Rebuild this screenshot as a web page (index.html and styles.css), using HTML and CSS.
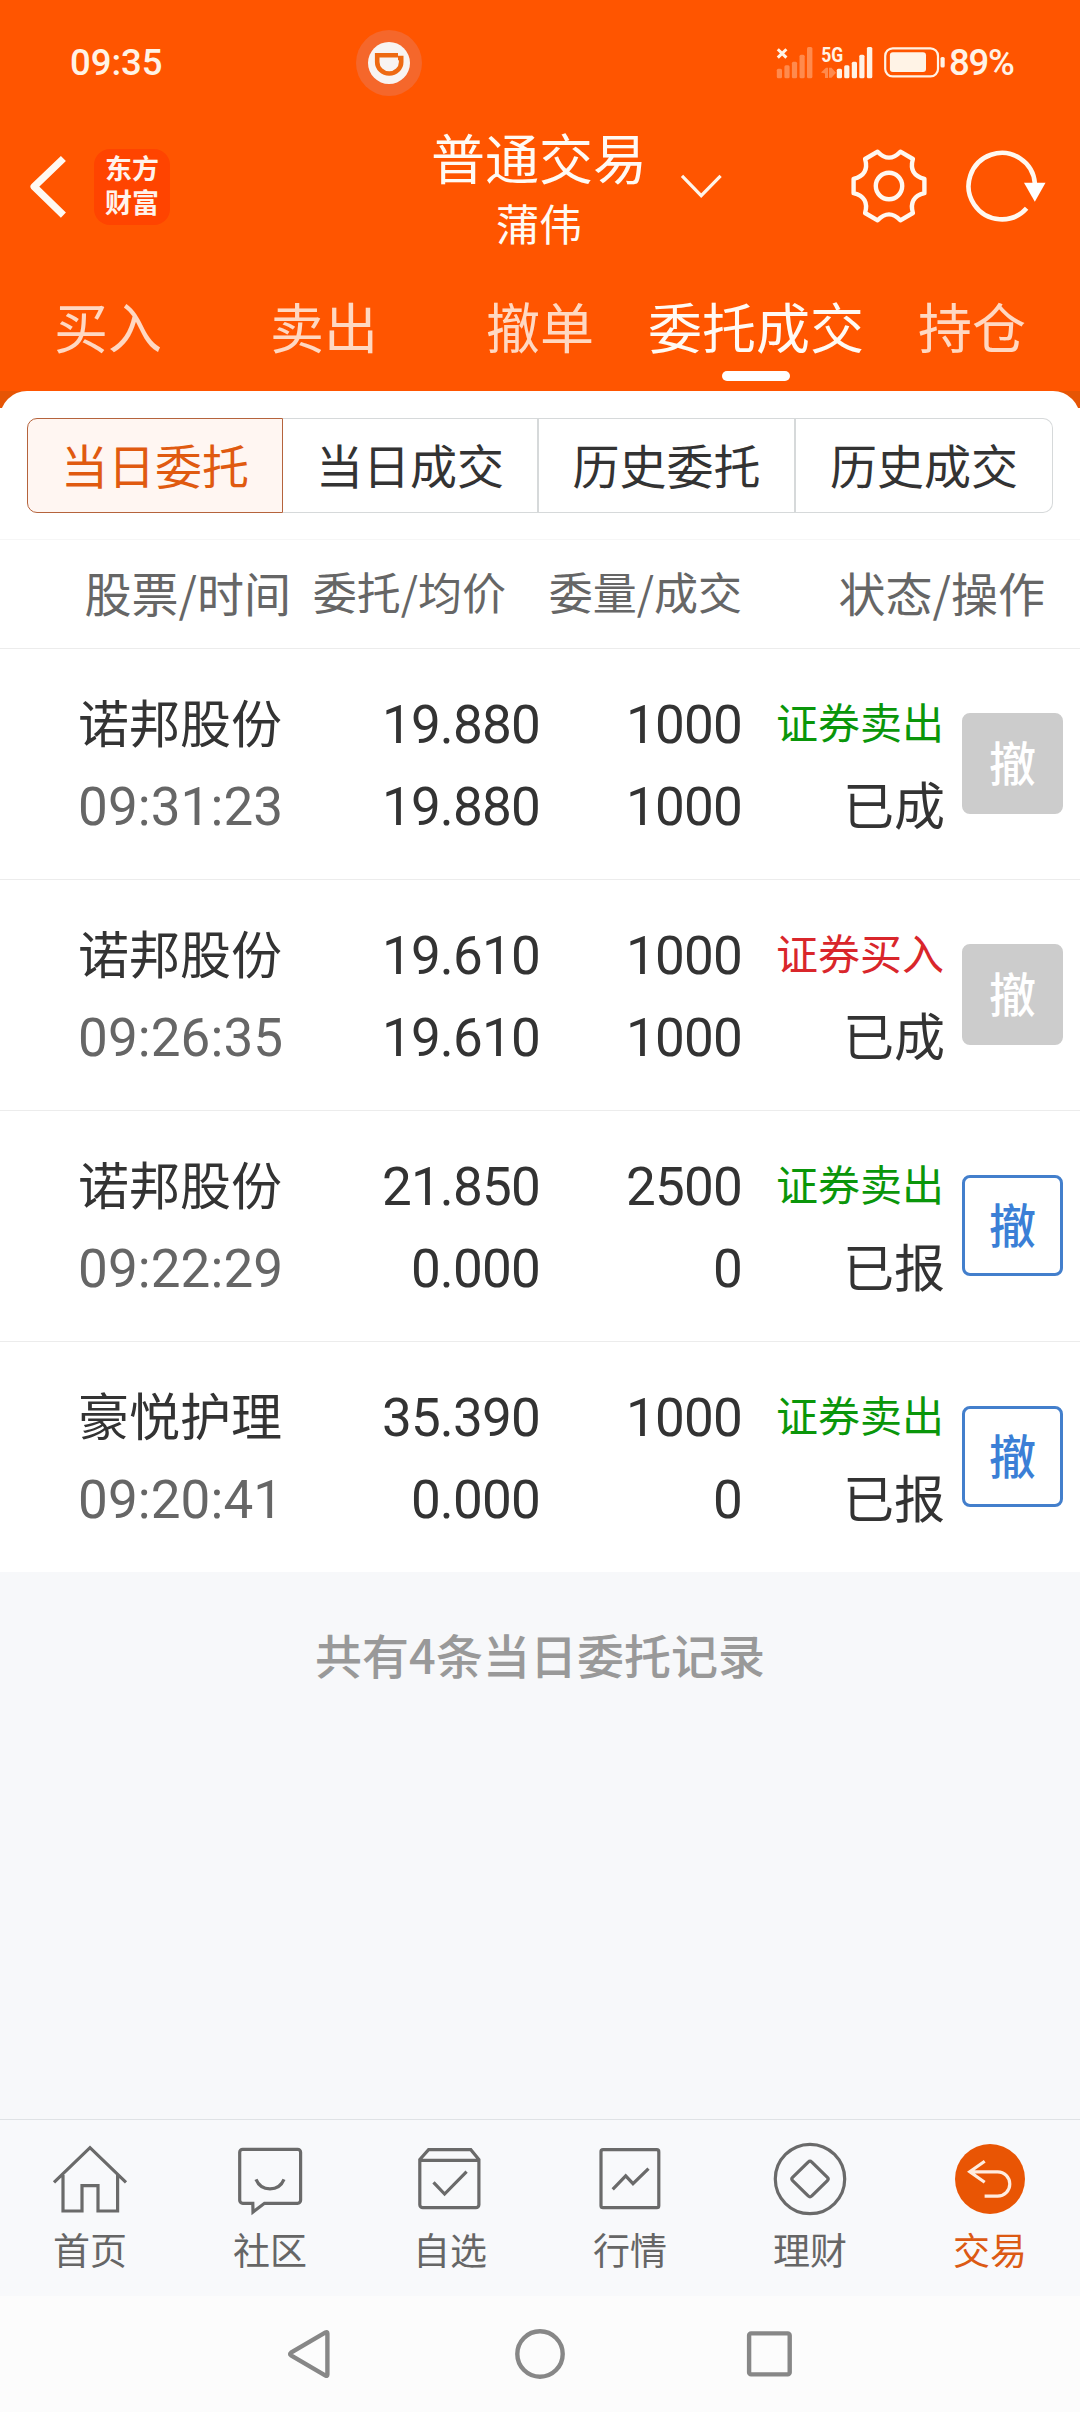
FILE: index.html
```html
<!DOCTYPE html>
<html lang="zh-CN">
<head>
<meta charset="utf-8">
<title>普通交易</title>
<link rel="stylesheet" href="styles.css">
</head>
<body>
<div class="app">
  <header class="top">
    <div class="status">
      <span class="clock">09:35</span>
      <svg class="pill" width="66" height="66" viewBox="0 0 66 66">
        <circle cx="33" cy="33" r="33" fill="#f5672b"/>
        <circle cx="33" cy="33" r="21" fill="#f8f4f2"/>
        <path d="M42 25.2H21.2V32a12 11.500 0 0 0 24 0V28H42" fill="none" stroke="#ee6a12" stroke-width="4.600"/>
      </svg>
      <svg class="signals" width="172" height="46" viewBox="776 40 172 46">
        <g fill="#ff8a4d">
          <rect x="776.8" y="68.7" width="5.2" height="9.5" rx="1.5"/><rect x="784.4" y="65.2" width="5.2" height="13" rx="1.5"/><rect x="791.9" y="61.7" width="5.2" height="16.5" rx="1.5"/><rect x="799.5" y="54.7" width="5.2" height="23.5" rx="1.5"/><rect x="807" y="47" width="5.4" height="31.2" rx="1.5"/>
          <path d="M821 72.5l5-4.7h2V78h-3v-4.500zM829 67.800h2.500l4.500 5-4.500 5H829z"/>
        </g>
        <path d="M777.8 49.2l8.6 8.4M786.4 49.2l-8.6 8.4" stroke="#fff3e6" stroke-width="3"/>
        <text class="net" x="821.2" y="62.4" textLength="22" lengthAdjust="spacingAndGlyphs">5G</text>
        <g fill="#fff3e6">
          <rect x="836.8" y="68.7" width="5.2" height="9.5" rx="1.5"/><rect x="844.2" y="65.2" width="5.2" height="13" rx="1.5"/><rect x="851.8" y="61.7" width="5.2" height="16.5" rx="1.5"/><rect x="859.3" y="54.7" width="5.2" height="23.5" rx="1.5"/><rect x="866.9" y="47" width="5.4" height="31.2" rx="1.5"/>
          <rect x="889.9" y="52.3" width="36.1" height="19.7" rx="3"/><rect x="940.5" y="57" width="4.2" height="10.5" rx="1.5"/>
        </g>
        <rect x="885.2" y="48.4" width="52.8" height="28" rx="7.5" fill="none" stroke="#fff3e6" stroke-width="2.2"/>
      </svg>
      <span class="charge">89%</span>
    </div>

    <div class="titlebar">
      <div class="brand">
        <svg width="44" height="76" viewBox="26 149 44 76"><path d="M63.400 158.500L34.100 186.700l29.300 28.500" fill="none" stroke="#fff9f2" stroke-width="7.200" stroke-linejoin="round"/></svg>
        <div class="logo"><span>东方</span><span>财富</span></div>
      </div>
      <div class="title">
        <span class="title-main">普通交易</span>
        <span class="title-sub">蒲伟</span>
      </div>
      <svg class="chevron" width="46" height="28" viewBox="678 172 46 28"><path d="M682 175.800l19.200 19.800 19.400-19.800" fill="none" stroke="#fff5ea" stroke-width="3.200"/></svg>
      <div class="tools">
        <svg width="80" height="80" viewBox="-40 -40 80 80" fill="none" stroke="#fff8f0" stroke-width="4.400" stroke-linejoin="round">
          <path d="M-11.400-34.300Q0-22.400 11.400-34.300L23.900-27Q19.400-11.200 35.400-7.200V7.200Q19.400 11.200 23.900 27L11.400 34.300Q0 22.400-11.400 34.300L-23.900 27Q-19.400 11.200-35.400 7.200V-7.200Q-19.400-11.200-23.900-27Z"/>
          <circle r="13.200"/>
        </svg>
        <svg width="88" height="80" viewBox="962 146.300 88 80">
          <path d="M1034.900 184A33.200 33.200 0 1 0 1026.600 208.500" fill="none" stroke="#fff8f0" stroke-width="4.600"/>
          <path d="M1024 183h21.500l-10.700 19z" fill="#fff"/>
        </svg>
      </div>
    </div>

    <nav class="tabs">
      <span>买入</span><span>卖出</span><span>撤单</span><span class="on">委托成交</span><span>持仓</span>
    </nav>
  </header>

  <section class="corner"><div class="corner-sheet"></div></section>

  <main class="sheet">
    <div class="segments">
      <span class="seg on">当日委托</span><span class="seg">当日成交</span><span class="seg">历史委托</span><span class="seg">历史成交</span>
    </div>
    <div class="cols head">
      <span class="big">股票/时间</span><span>委托/均价</span><span>委量/成交</span><span class="big">状态/操作</span>
    </div>

    <div class="cols row">
      <div class="cell stock"><span class="zh">诺邦股份</span><span class="num time">09:31:23</span></div>
      <div class="cell"><span class="num">19.880</span><span class="num">19.880</span></div>
      <div class="cell"><span class="num">1000</span><span class="num">1000</span></div>
      <div class="cell"><span class="side sell">证券卖出</span><span class="zh state">已成</span></div>
      <span class="cancel off">撤</span>
    </div>
    <div class="cols row">
      <div class="cell stock"><span class="zh">诺邦股份</span><span class="num time">09:26:35</span></div>
      <div class="cell"><span class="num">19.610</span><span class="num">19.610</span></div>
      <div class="cell"><span class="num">1000</span><span class="num">1000</span></div>
      <div class="cell"><span class="side buy">证券买入</span><span class="zh state">已成</span></div>
      <span class="cancel off">撤</span>
    </div>
    <div class="cols row">
      <div class="cell stock"><span class="zh">诺邦股份</span><span class="num time">09:22:29</span></div>
      <div class="cell"><span class="num">21.850</span><span class="num">0.000</span></div>
      <div class="cell"><span class="num">2500</span><span class="num">0</span></div>
      <div class="cell"><span class="side sell">证券卖出</span><span class="zh state">已报</span></div>
      <span class="cancel">撤</span>
    </div>
    <div class="cols row">
      <div class="cell stock"><span class="zh">豪悦护理</span><span class="num time">09:20:41</span></div>
      <div class="cell"><span class="num">35.390</span><span class="num">0.000</span></div>
      <div class="cell"><span class="num">1000</span><span class="num">0</span></div>
      <div class="cell"><span class="side sell">证券卖出</span><span class="zh state">已报</span></div>
      <span class="cancel">撤</span>
    </div>
  </main>

  <p class="summary">共有4条当日委托记录</p>

  <nav class="tabbar">
    <div class="item"><svg viewBox="0 0 80 80"><path d="M4 42.300L40 7.700l36 34.600M13 35v36h19V45.700h16V71h19.600V35"/></svg><span>首页</span></div>
    <div class="item"><svg viewBox="0 0 80 80"><path d="M22.800 63.300H12.700a3 3 0 0 1-3-3v-48a3 3 0 0 1 3-3h54.900a3 3 0 0 1 3 3v48a3 3 0 0 1-3 3H34.500L23 72z"/><path d="M26 39.300q3.900 9.500 14 9.500t14-9.500"/></svg><span>社区</span></div>
    <div class="item"><svg viewBox="0 0 80 80"><path d="M9.800 19.500l8.800-9.800h42.200l8.100 9.800v45.200a3 3 0 0 1-3 3H12.800a3 3 0 0 1-3-3zM9.800 20.300h59M23.500 42.300L34.600 54l22-22.300"/></svg><span>自选</span></div>
    <div class="item"><svg viewBox="0 0 80 80"><rect x="11" y="9.700" width="57.800" height="58" rx="2"/><path d="M22.700 49.300l13-13.400 7.300 7.800 15.500-15"/></svg><span>行情</span></div>
    <div class="item"><svg viewBox="0 0 80 80"><circle cx="40" cy="39" r="34.700"/><path d="M38.400 22q1.600-1.800 3.200 0l15.800 15.400q1.600 1.600 0 3.200L41.600 56q-1.600 1.800-3.200 0L22.600 40.600q-1.600-1.600 0-3.200z"/></svg><span>理财</span></div>
    <div class="item on"><svg viewBox="0 0 80 80"><circle cx="40" cy="39" r="35" fill="#e95504" stroke="none"/><path d="M34.700 21.200L19.800 31.800l14.900 10.400M20 31.800h27.600a12.200 12.200 0 0 1 0 24.400h-13" stroke="#ffece0"/></svg><span>交易</span></div>
  </nav>

  <footer class="sysnav">
    <svg viewBox="280 2326 60 56"><path d="M325.500 2332.400q1.900-.9 1.900 1v41.200q0 1.900-1.900 1L291 2355.300q-1.800-1.300 0-2.600z"/></svg>
    <svg viewBox="510 2326 60 56"><circle cx="540" cy="2354" r="22.700"/></svg>
    <svg viewBox="740 2326 60 56"><rect x="749.100" y="2333.400" width="40.600" height="41" rx="2"/></svg>
  </footer>
</div>
</body>
</html>
```
FILE: styles.css
```css
* { box-sizing: border-box; }

body {
  margin: 0;
  background: #f7f8fa;
  color: #333;
  font-family: "Noto Sans CJK SC", sans-serif;
}

.app {
  width: 1080px;
  height: 2412px;
  display: flex;
  flex-direction: column;
  overflow: hidden;
}

svg { display: block; flex: none; }
span { white-space: nowrap; }

/* Header */
.top { height: 391px; background: #ff5500; flex: none; }

.status {
  height: 126px;
  display: flex;
  align-items: center;
  padding-left: 70px;
  color: #fff3e6;
  font: 500 36.5px/40px Roboto, sans-serif;
}
.clock { width: 286px; }
.pill { margin-right: 354px; }
.signals { margin-right: 1px; }
.charge { letter-spacing: -1.2px; }
.net { font: 700 20px Roboto, sans-serif; fill: #fff3e6; }

.titlebar {
  height: 146px;
  display: grid;
  grid-template-columns: 406px 266px 1fr auto;
  color: #fffaf4;
}
.brand { display: flex; gap: 24px; padding: 23px 0 0 26px; }
.logo {
  width: 76px;
  height: 76px;
  border-radius: 16px;
  background: #ff4400;
  color: #fff3ec;
  display: flex;
  flex-direction: column;
  align-items: center;
  padding-top: 2px;
  font-size: 27px;
  font-weight: 700;
  line-height: 34px;
}
.title { display: flex; flex-direction: column; align-items: center; padding-top: 1px; }
.title-main { font-size: 54px; line-height: 60px; }
.title-sub { font-size: 43px; line-height: 70px; }
.chevron { margin: 46px 0 0 6px; }
.tools { display: flex; gap: 33px; padding: 20px 30px 0 0; }

.tabs {
  display: grid;
  grid-template-columns: repeat(5, 216px);
  color: #ffd8c2;
  font-size: 54px;
  line-height: 84px;
  text-align: center;
  padding-top: 12px;
}
.tabs .on {
  color: #fffaf4;
  display: flex;
  flex-direction: column;
  align-items: center;
}
.tabs .on::after {
  content: "";
  width: 68px;
  height: 10px;
  border-radius: 5px;
  background: #fff;
  margin-top: 3px;
}

/* Rounded top edge of the white sheet */
.corner { height: 17px; flex: none; background: #e65505; overflow: hidden; }
.corner-sheet { height: 60px; background: #fff; border-radius: 27px 27px 0 0; }

.sheet { background: #fff; flex: none; height: 1164px; }

.segments {
  display: grid;
  grid-template-columns: 256px 256px 257px 257px;
  margin: 0 27px;
  padding-top: 10px;
  height: 131px;
  font-size: 47px;
  line-height: 89px;
  text-align: center;
}
.seg { height: 95px; border: 1px solid #d6d9da; border-left: 0; }
.seg + .seg { border-right-width: 2px; }
.seg:last-child { border-right-width: 1px; border-radius: 0 10px 10px 0; }
.seg.on {
  color: #e05a10;
  background: #fff6f2;
  border: 1px solid #b5633c;
  border-radius: 10px 0 0 10px;
}

.cols {
  display: grid;
  grid-template-columns: 222px 240px 202px 202px 119px;
  padding-left: 78px;
}
.head {
  border-top: 1px solid #f6f6f6;
  height: 109px;
  grid-template-columns: 213px 215px 236px 303px;
  color: #666;
  font-size: 44px;
  line-height: 103px;
  text-align: right;
}
.head .big { font-size: 47px; }

.row { height: 231px; border-top: 1px solid #ececec; align-items: start; }
.cell {
  display: flex;
  flex-direction: column;
  align-items: flex-end;
  padding-top: 35px;
}
.stock { align-items: flex-start; }
.num {
  font: 400 53px/82px Roboto, sans-serif;
  letter-spacing: -0.8px;
}
.time { color: #666; letter-spacing: 0.1px; }
.zh { font-size: 51px; line-height: 75px; margin-bottom: 7px; }
.side { font-size: 42px; line-height: 74px; margin-bottom: 8px; }
.state { margin-right: -1px; }
.sell { color: #0a960a; }
.buy { color: #d9262b; }

.cancel {
  width: 101px;
  height: 101px;
  margin: 64px 0 0 18px;
  border: 3px solid #437fcc;
  border-radius: 8px;
  color: #3b7fd6;
  font-size: 47px;
  font-weight: 500;
  line-height: 90px;
  text-align: center;
}
.cancel.off { background: #ccc; border-color: #ccc; color: #fff; }

.summary {
  margin: 0;
  flex: 1;
  padding-top: 48px;
  color: #999;
  font-size: 47px;
  font-weight: 500;
  line-height: 68px;
  text-align: center;
}

/* App tab bar */
.tabbar {
  flex: none;
  height: 177px;
  display: grid;
  grid-template-columns: repeat(6, 180px);
  border-top: 1px solid #dfe2e5;
  background: #f8f9fb;
}
.item {
  display: flex;
  flex-direction: column;
  align-items: center;
  padding-top: 20px;
  color: #666;
  font-size: 37px;
  line-height: 58px;
}
.item svg { width: 80px; height: 80px; fill: none; stroke: #6a6a6a; stroke-width: 3.2; }
.item.on { color: #dc5a14; }

/* System navigation */
.sysnav {
  flex: none;
  height: 116px;
  display: flex;
  justify-content: center;
  gap: 170px;
  padding-top: 30px;
  background: #fcfcfc;
}
.sysnav svg { width: 60px; height: 56px; fill: none; stroke: #878787; stroke-width: 4.4; }
```
